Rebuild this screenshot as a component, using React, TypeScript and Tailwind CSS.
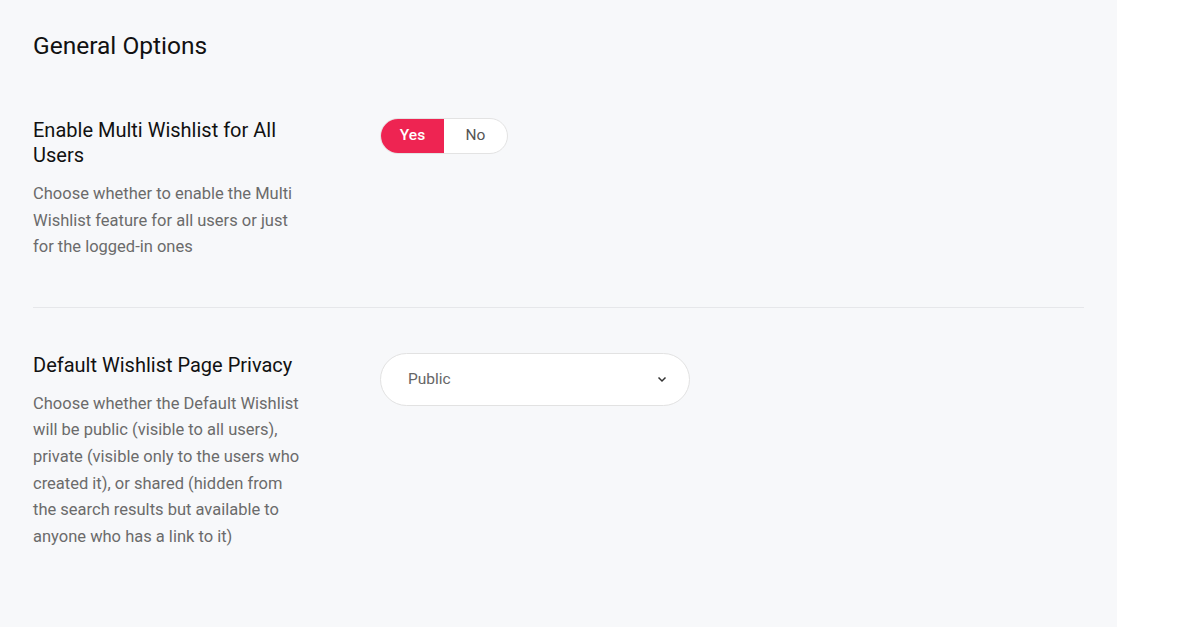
import { useState } from "react";

function YesNo() {
  const [on, setOn] = useState(true);
  return (
    <div className="flex h-[36px] w-[128px] overflow-hidden rounded-full border border-[#e3e3e3] bg-white text-[15.5px]">
      <button
        onClick={() => setOn(true)}
        className={`flex w-[63px] items-center justify-center font-medium ${on ? "bg-[#ee2452] text-white" : "text-[#555]"}`}
      >
        Yes
      </button>
      <button
        onClick={() => setOn(false)}
        className={`flex flex-1 items-center justify-center ${!on ? "bg-[#ee2452] text-white" : "text-[#555]"}`}
      >
        No
      </button>
    </div>
  );
}

function PrivacySelect() {
  return (
    <div className="flex h-[53px] w-[310px] items-center justify-between rounded-full border border-[#e2e2e2] bg-white pl-[27px] pr-[22px]">
      <span className="text-[15.5px] text-[#666]">Public</span>
      <svg width="10" height="7" viewBox="0 0 10 7" fill="none">
        <path d="M1.5 1.5L5 5L8.5 1.5" stroke="#333" strokeWidth="1.5" />
      </svg>
    </div>
  );
}

function OptionRow(props: { title: string; desc: string; children: any; last?: boolean; top: string }) {
  return (
    <div className={`flex ${props.top} ${props.last ? "" : "border-b border-[#e6e7ea] pb-[46px]"}`}>
      <div className="w-[347px] shrink-0 pr-[72px]">
        <h3 className="text-[20px] leading-[25px] text-[#111]">{props.title}</h3>
        <p className="mt-[13px] text-[16.5px] leading-[26.6px] text-[#6b6b6b]">{props.desc}</p>
      </div>
      <div>{props.children}</div>
    </div>
  );
}

export default function App() {
  return (
    <div className="h-[636px] w-[1200px] bg-white" style={{ fontFamily: "Roboto, 'Liberation Sans', sans-serif" }}>
      <div className="h-[627px] w-[1117px] bg-[#f7f8fa] pl-[33px] pr-[33px] pt-[30px]">
        <h2 className="text-[24.5px] leading-[32px] text-[#111]">General Options</h2>
        <OptionRow
          top="pt-[56px]"
          title="Enable Multi Wishlist for All Users"
          desc="Choose whether to enable the Multi Wishlist feature for all users or just for the logged-in ones"
        >
          <YesNo />
        </OptionRow>
        <OptionRow
          top="pt-[45px]"
          last
          title="Default Wishlist Page Privacy"
          desc="Choose whether the Default Wishlist will be public (visible to all users), private (visible only to the users who created it), or shared (hidden from the search results but available to anyone who has a link to it)"
        >
          <PrivacySelect />
        </OptionRow>
      </div>
    </div>
  );
}
